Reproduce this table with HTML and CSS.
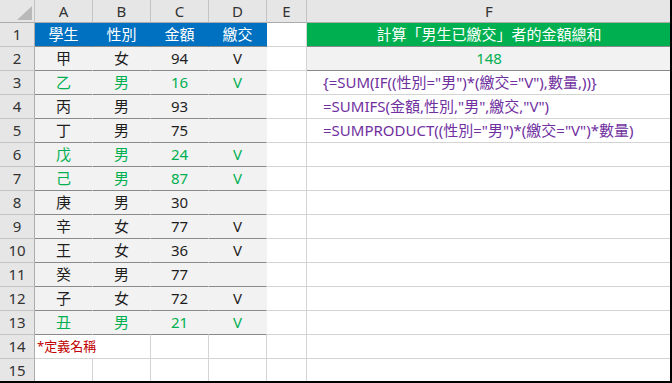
FILE: index.html
```html
<!DOCTYPE html>
<html lang="zh-Hant">
<head>
<meta charset="utf-8">
<title>Sheet</title>
<link rel="stylesheet" href="styles.css">
</head>
<body>
<div class="sheet">
  <div class="c hd corner"><svg width="15" height="14" viewBox="0 0 15 14"><polygon points="15,0 15,14 0,14" fill="#b9b9b9"/></svg></div>
  <div class="c hd">A</div><div class="c hd">B</div><div class="c hd">C</div><div class="c hd">D</div><div class="c hd">E</div><div class="c hd">F</div>

  <div class="c rh">1</div>
  <div class="c blue">學生</div><div class="c blue">性別</div><div class="c blue">金額</div><div class="c blue">繳交</div><div class="c"></div><div class="c f1">計算「男生已繳交」者的金額總和</div>

  <div class="c rh">2</div>
  <div class="c dat">甲</div><div class="c dat">女</div><div class="c dat">94</div><div class="c dat">V</div><div class="c"></div><div class="c f2">148</div>

  <div class="c rh">3</div>
  <div class="c dat grn">乙</div><div class="c dat grn">男</div><div class="c dat grn">16</div><div class="c dat grn">V</div><div class="c"></div><div class="c fx">{=SUM(IF((性別="男")*(繳交="V"),數量,))}</div>

  <div class="c rh">4</div>
  <div class="c dat">丙</div><div class="c dat">男</div><div class="c dat">93</div><div class="c dat"></div><div class="c"></div><div class="c fx">=SUMIFS(金額,性別,"男",繳交,"V")</div>

  <div class="c rh">5</div>
  <div class="c dat">丁</div><div class="c dat">男</div><div class="c dat">75</div><div class="c dat"></div><div class="c"></div><div class="c fx">=SUMPRODUCT((性別="男")*(繳交="V")*數量)</div>

  <div class="c rh">6</div>
  <div class="c dat grn">戊</div><div class="c dat grn">男</div><div class="c dat grn">24</div><div class="c dat grn">V</div><div class="c"></div><div class="c"></div>

  <div class="c rh">7</div>
  <div class="c dat grn">己</div><div class="c dat grn">男</div><div class="c dat grn">87</div><div class="c dat grn">V</div><div class="c"></div><div class="c"></div>

  <div class="c rh">8</div>
  <div class="c dat">庚</div><div class="c dat">男</div><div class="c dat">30</div><div class="c dat"></div><div class="c"></div><div class="c"></div>

  <div class="c rh">9</div>
  <div class="c dat">辛</div><div class="c dat">女</div><div class="c dat">77</div><div class="c dat">V</div><div class="c"></div><div class="c"></div>

  <div class="c rh">10</div>
  <div class="c dat">王</div><div class="c dat">女</div><div class="c dat">36</div><div class="c dat">V</div><div class="c"></div><div class="c"></div>

  <div class="c rh">11</div>
  <div class="c dat">癸</div><div class="c dat">男</div><div class="c dat">77</div><div class="c dat"></div><div class="c"></div><div class="c"></div>

  <div class="c rh">12</div>
  <div class="c dat">子</div><div class="c dat">女</div><div class="c dat">72</div><div class="c dat">V</div><div class="c"></div><div class="c"></div>

  <div class="c rh">13</div>
  <div class="c dat grn">丑</div><div class="c dat grn">男</div><div class="c dat grn">21</div><div class="c dat grn">V</div><div class="c"></div><div class="c"></div>

  <div class="c rh">14</div>
  <div class="c note">*定義名稱</div><div class="c"></div><div class="c"></div><div class="c"></div><div class="c"></div>

  <div class="c rh">15</div>
  <div class="c"></div><div class="c"></div><div class="c"></div><div class="c"></div><div class="c"></div><div class="c"></div>
</div>
</body>
</html>
```
FILE: styles.css
```css
html, body {
  margin: 0;
  padding: 0;
  background: #ffffff;
}

.sheet {
  width: 670px;
  height: 381px;
  overflow: hidden;
  border-right: 2px solid #000;
  border-bottom: 2px solid #000;
  display: grid;
  grid-template-columns: 35px 58px 58px 58px 58px 40px 365px;
  grid-template-rows: 23px repeat(15, 24px);
  font-family: "Noto Sans", "Noto Sans CJK TC", sans-serif;
  font-size: 15px;
  color: #1e1e1e;
}

.c {
  box-sizing: border-box;
  border-right: 1px solid #d4d4d4;
  border-bottom: 1px solid #d4d4d4;
  background: #fff;
  display: flex;
  align-items: center;
  justify-content: center;
  white-space: nowrap;
  line-height: 1;
  overflow: visible;
}

.hd {
  background: #e6e6e6;
  border-right-color: #c4c4c4;
  border-bottom-color: #acacac;
  color: #333;
}

.corner {
  justify-content: flex-end;
  align-items: flex-end;
  padding: 0 2px 2px 0;
}

.corner svg {
  display: block;
}

.rh {
  background: #e6e6e6;
  border-right-color: #acacac;
  border-bottom-color: #c4c4c4;
  color: #333;
}

.blue {
  background: #0070c0;
  border-right-color: #0070c0;
  border-bottom-color: #8a8a8a;
  color: #fff;
}

.dat {
  background: #f2f2f2;
  border-right-color: #f2f2f2;
  border-bottom-color: #8a8a8a;
}

.grn {
  color: #00b050;
}

.f1 {
  background: #00b050;
  border-bottom-color: #8a8a8a;
  color: #fff;
}

.f2 {
  background: #f2f2f2;
  border-bottom-color: #8a8a8a;
  color: #00b050;
}

.fx {
  justify-content: flex-start;
  padding-left: 16px;
  color: #7030a0;
}

.note {
  grid-column: span 2;
  justify-content: flex-start;
  padding-left: 2px;
  font-size: 13px;
  color: #c00000;
}
```
